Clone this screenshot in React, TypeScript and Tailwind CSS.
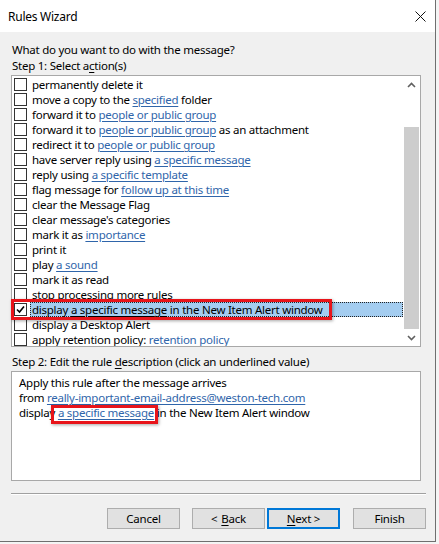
import type { ReactNode } from "react";

type Part = string | { link: string };

const actions: Part[][] = [
    ["permanently delete it"],
    ["move a copy to the ", { link: "specified" }, " folder"],
    ["forward it to ", { link: "people or public group" }],
    ["forward it to ", { link: "people or public group" }, " as an attachment"],
    ["redirect it to ", { link: "people or public group" }],
    ["have server reply using ", { link: "a specific message" }],
    ["reply using ", { link: "a specific template" }],
    ["flag message for ", { link: "follow up at this time" }],
    ["clear the Message Flag"],
    ["clear message's categories"],
    ["mark it as ", { link: "importance" }],
    ["print it"],
    ["play ", { link: "a sound" }],
    ["mark it as read"],
    ["stop processing more rules"],
    ["display ", { link: "a specific message" }, " in the New Item Alert window"],
    ["display a Desktop Alert"],
    ["apply retention policy: ", { link: "retention policy" }],
];

const SELECTED = 15;

const Label = ({ parts, selected }: { parts: Part[]; selected?: boolean }) => (
    <span className="whitespace-pre">
        {parts.map((p, i) =>
            typeof p === "string" ? (
                p
            ) : (
                <span
                    key={i}
                    className={
                        selected
                            ? "underline underline-offset-2"
                            : "text-[#2f65aa] underline underline-offset-2"
                    }
                >
                    {p.link}
                </span>
            )
        )}
    </span>
);

const Checkbox = ({ checked }: { checked?: boolean }) => (
    <div className="flex h-[13px] w-[13px] shrink-0 items-center justify-center border border-[#333] bg-white">
        {checked && (
            <svg width="9" height="9" viewBox="0 0 9 9">
                <path d="M1 4.5 L3.5 7 L8 1.5" fill="none" stroke="#000" strokeWidth="1.6" />
            </svg>
        )}
    </div>
);

const Chevron = ({ up }: { up?: boolean }) => (
    <svg width="9" height="6" viewBox="0 0 9 6">
        <path
            d={up ? "M1 5 L4.5 1.5 L8 5" : "M1 1 L4.5 4.5 L8 1"}
            fill="none"
            stroke="#606060"
            strokeWidth="1.6"
        />
    </svg>
);

const Button = ({ children, primary }: { children: ReactNode; primary?: boolean }) => (
    <div
        className={
            primary
                ? "flex h-[21px] w-[73px] items-center justify-center border-2 border-[#0078d7] bg-[#e1e1e1]"
                : "flex h-[21px] w-[73px] items-center justify-center border border-[#adadad] bg-[#e1e1e1]"
        }
    >
        {children}
    </div>
);

export default function App() {
    return (
        <div className="h-[544px] w-[439px] bg-[#f4f4f4] font-['Noto_Sans',sans-serif] text-[11.5px] leading-[15px] tracking-[-0.25px] text-black">
            <div className="flex h-[542px] w-[436px] flex-col border-r border-b border-[#6f6f6f] bg-[#f0f0f0]">
                {/* title bar */}
                <div className="flex h-[32px] shrink-0 items-center justify-between bg-white pl-[8px] pr-[9px] text-[12px]">
                    <span>Rules Wizard</span>
                    <svg width="11" height="11" viewBox="0 0 11 11">
                        <path d="M0.5 0.5 L10.5 10.5 M10.5 0.5 L0.5 10.5" stroke="#111" strokeWidth="1" />
                    </svg>
                </div>

                <div className="flex flex-col pl-[11px] pt-[10px]">
                    <div className="h-[16px] pl-[1px] leading-[16px]">What do you want to do with the message?</div>
                    <div className="h-[17px] pl-[1px] leading-[16px]">
                        Step 1: Select a<span className="underline underline-offset-2">c</span>tion(s)
                    </div>

                    {/* action list */}
                    <div className="relative flex h-[272px] w-[410px] border border-[#a8a8a8] bg-white">
                        <div className="flex flex-1 flex-col overflow-hidden pt-[1px]">
                            {actions.map((parts, i) => (
                                <div key={i} className="flex h-[15px] shrink-0 items-center pl-[2px]">
                                    <Checkbox checked={i === SELECTED} />
                                    {i === SELECTED ? (
                                        <div className="ml-[3px] flex h-[15px] flex-1 items-center border border-dotted border-[#222] bg-[#a4cdf0] pl-[1px]">
                                            <Label parts={parts} selected />
                                        </div>
                                    ) : (
                                        <div className="ml-[5px]">
                                            <Label parts={parts} />
                                        </div>
                                    )}
                                </div>
                            ))}
                        </div>
                        {/* scrollbar */}
                        <div className="flex w-[17px] shrink-0 flex-col">
                            <div className="flex h-[17px] items-center justify-center">
                                <Chevron up />
                            </div>
                            <div className="h-[34px]" />
                            <div className="mx-[1px] flex-1 bg-[#cdcdcd]" />
                            <div className="flex h-[17px] items-center justify-center">
                                <Chevron />
                            </div>
                        </div>
                        <div className="pointer-events-none absolute left-[-1px] top-[223px] h-[21px] w-[321px] border-[3px] border-[#e8141a] shadow-[1px_1px_3px_rgba(0,0,0,0.35)]" />
                    </div>

                    <div className="mt-[7px] h-[17px] pl-[1px] leading-[16px]">
                        Step 2: Edit the rule <span className="underline underline-offset-2">d</span>escription (click an underlined value)
                    </div>

                    {/* rule description */}
                    <div className="relative h-[110px] w-[410px] border border-[#a8a8a8] bg-white pl-[7px] pt-[3px]">
                        <div>Apply this rule after the message arrives</div>
                        <div>
                            from{" "}
                            <span className="text-[#2f65aa] underline underline-offset-2">
                                really-important-email-address@weston-tech.com
                            </span>
                        </div>
                        <div>
                            display{" "}
                            <span className="text-[#2f65aa] underline underline-offset-2">a specific message</span> in the
                            New Item Alert window
                        </div>
                        <div className="pointer-events-none absolute left-[39px] top-[33px] h-[19px] w-[107px] border-[3px] border-[#e8141a] shadow-[1px_1px_3px_rgba(0,0,0,0.35)]" />
                    </div>

                    <div className="mt-[12px] h-[1px] w-[415px] bg-[#a0a0a0]" />
                    <div className="h-[1px] w-[415px] bg-white" />

                    <div className="mt-[13px] flex w-[415px] justify-end">
                        <Button>Cancel</Button>
                        <div className="ml-[12px]">
                            <Button>
                                &lt; <span className="ml-[4px] underline underline-offset-2">B</span>ack
                            </Button>
                        </div>
                        <div className="ml-[2px]">
                            <Button primary>
                                <span className="underline underline-offset-2">N</span>ext &gt;
                            </Button>
                        </div>
                        <div className="ml-[13px]">
                            <Button>Finish</Button>
                        </div>
                    </div>
                </div>
            </div>
        </div>
    );
}
